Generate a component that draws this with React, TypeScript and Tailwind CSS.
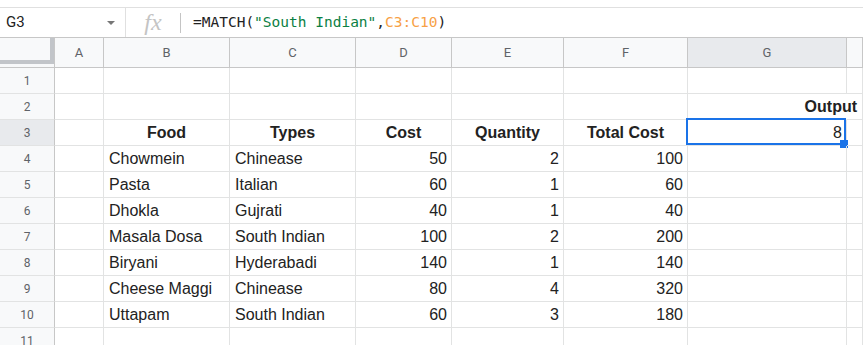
import React from 'react';

type Align = 'left' | 'right' | 'center';
type Cell = { v: string; a?: Align; b?: boolean };

const cols = ['A', 'B', 'C', 'D', 'E', 'F', 'G', 'H'];

const L = (v: string): Cell => ({ v, a: 'left' });
const R = (v: string): Cell => ({ v, a: 'right' });
const H = (v: string): Cell => ({ v, a: 'center', b: true });
const E: Cell = { v: '' };

const data: Cell[][] = [
  [E, E, E, E, E, E, E, E],
  [E, E, E, E, E, E, { v: 'Output', a: 'right', b: true }, E],
  [E, H('Food'), H('Types'), H('Cost'), H('Quantity'), H('Total Cost'), R('8'), E],
  [E, L('Chowmein'), L('Chinease'), R('50'), R('2'), R('100'), E, E],
  [E, L('Pasta'), L('Italian'), R('60'), R('1'), R('60'), E, E],
  [E, L('Dhokla'), L('Gujrati'), R('40'), R('1'), R('40'), E, E],
  [E, L('Masala Dosa'), L('South Indian'), R('100'), R('2'), R('200'), E, E],
  [E, L('Biryani'), L('Hyderabadi'), R('140'), R('1'), R('140'), E, E],
  [E, L('Cheese Maggi'), L('Chinease'), R('80'), R('4'), R('320'), E, E],
  [E, L('Uttapam'), L('South Indian'), R('60'), R('3'), R('180'), E, E],
  [E, E, E, E, E, E, E, E],
];

const alignCls: Record<Align, string> = {
  left: 'justify-start pl-[5px]',
  right: 'justify-end pr-[4px]',
  center: 'justify-center',
};

const App: React.FC = () => {
  return (
    <div className="w-[863px] h-[345px] overflow-hidden bg-white font-['Liberation_Sans',Arial,sans-serif] text-[#222]">
      {/* top strip */}
      <div className="h-[8px] border-b border-[#e0e0e0]" />

      {/* formula bar */}
      <div className="h-[30px] flex items-center border-b border-[#c7c7c7]">
        <div className="w-[126px] h-full flex items-center justify-between pl-[6px] pr-[10px] border-r border-[#e0e0e0]">
          <span className="text-[15px] font-['Roboto','Liberation_Sans',sans-serif] text-[#222]">G3</span>
          <svg width="8" height="4" viewBox="0 0 8 4">
            <path d="M0 0 L8 0 L4 4 Z" fill="#777" />
          </svg>
        </div>
        <div className="w-[54px] h-full flex items-center justify-center">
          <span className="text-[24px] italic font-['Liberation_Serif',serif] text-[#c4c4c4] leading-none -mt-[2px]">fx</span>
        </div>
        <div className="w-px h-[20px] bg-[#c4c4c4]" />
        <div className="pl-[12px] text-[14.5px] font-['DejaVu_Sans_Mono',monospace] whitespace-nowrap">
          <span className="text-[#222]">=MATCH(</span>
          <span className="text-[#0b8043]">"South Indian"</span>
          <span className="text-[#222]">,</span>
          <span className="text-[#f7a146]">C3:C10</span>
          <span className="text-[#222]">)</span>
        </div>
      </div>

      {/* grid */}
      <div className="grid grid-cols-[55px_49px_126px_126px_96px_112px_124px_159px_1fr]">
        {/* column headers */}
        <div className="h-[30px] bg-[#f8f9fa] border-r border-b border-[#c7c7c7]">
          <div className="h-[26px] w-[54px] border-r-4 border-b-4 border-[#c2c5c9]" />
        </div>
        {cols.map((c) => (
          <div
            key={c}
            className={`h-[30px] flex items-center justify-center border-r border-b border-[#c7c7c7] text-[13px] font-['Roboto','Liberation_Sans',sans-serif] text-[#5f6368] ${
              c === 'G' ? 'bg-[#e8eaed]' : 'bg-[#f8f9fa]'
            }`}
          >
            {c === 'H' ? '' : c}
          </div>
        ))}

        {data.map((row, ri) => (
          <React.Fragment key={ri}>
            <div
              className={`h-[26px] flex items-center justify-center border-r border-r-[#c7c7c7] border-b border-b-[#e2e3e3] text-[12px] font-['Roboto','Liberation_Sans',sans-serif] text-[#5f6368] ${
                ri === 2 ? 'bg-[#e8eaed]' : 'bg-[#f8f9fa]'
              }`}
            >
              {ri + 1}
            </div>
            {row.map((cell, ci) => {
              const isSel = ri === 2 && ci === 6;
              const isOutput = ri === 1 && ci === 6;
              return (
                <div
                  key={ci}
                  className={`relative h-[26px] flex items-center whitespace-nowrap text-[16px] leading-[18px] border-b border-[#e2e3e3] ${
                    isOutput ? 'border-r border-r-transparent' : 'border-r'
                  } ${alignCls[cell.a ?? 'left']} ${cell.b ? 'font-bold' : ''}`}
                >
                  {isOutput ? (
                    <span className="-mr-[15px] z-10">{cell.v}</span>
                  ) : (
                    cell.v
                  )}
                  {isSel && (
                    <>
                      <div className="absolute -left-[2px] -top-[2px] w-[160px] h-[27px] border-2 border-[#1a73e8] pointer-events-none" />
                      <div className="absolute left-[152px] top-[20px] w-[8px] h-[8px] bg-[#1a73e8]" />
                    </>
                  )}
                </div>
              );
            })}
          </React.Fragment>
        ))}
      </div>
    </div>
  );
};

export default App;
